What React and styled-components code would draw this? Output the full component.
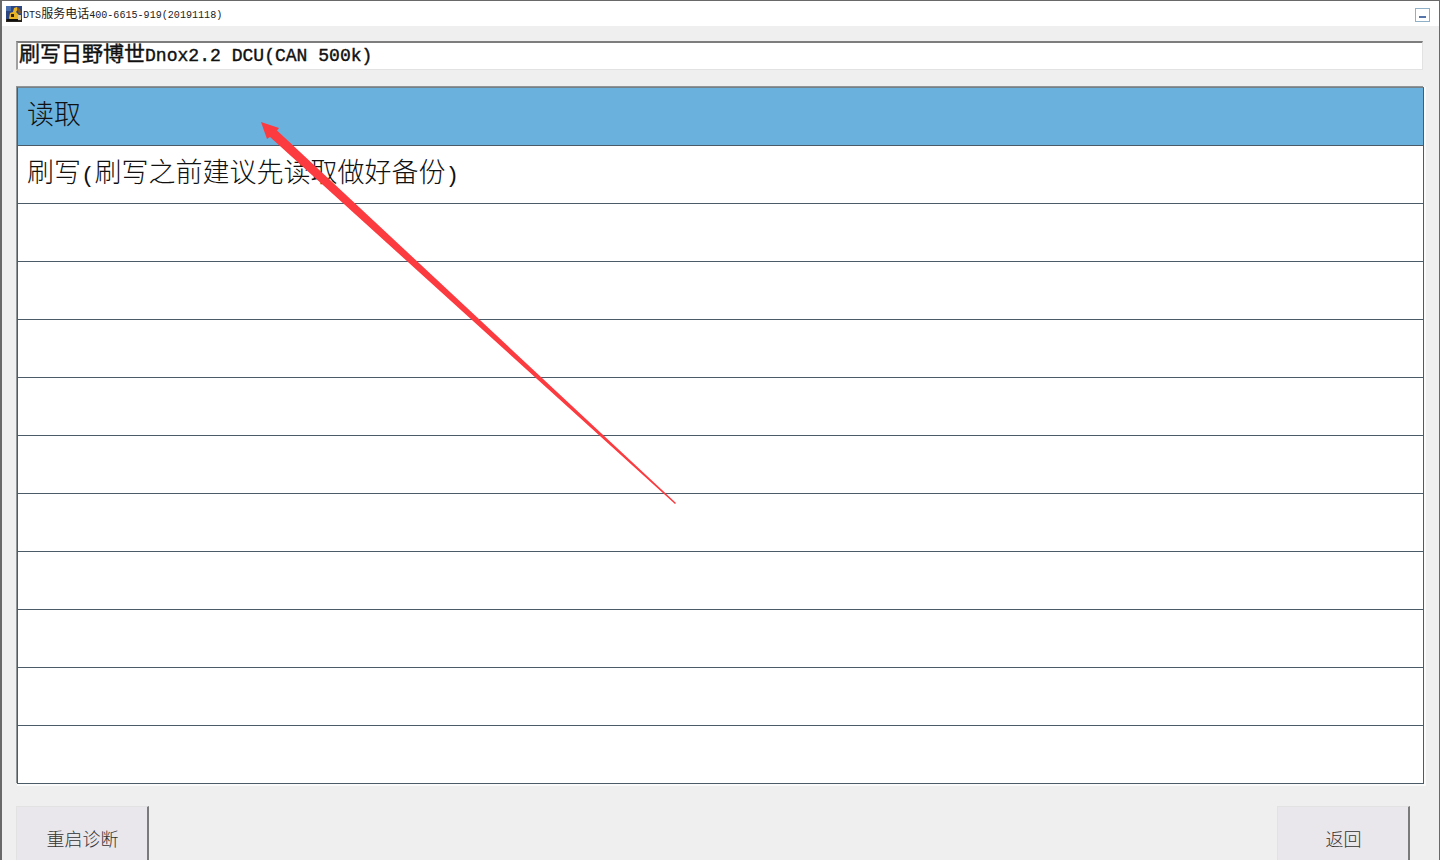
import React from 'react'
import styled, { createGlobalStyle } from 'styled-components'

const GlobalStyle = createGlobalStyle`
  html, body {
    margin: 0;
    padding: 0;
    height: 860px;
    overflow: hidden;
    background: #efefef;
  }
  * {
    box-sizing: border-box;
  }
`

const Window = styled.div`
  position: relative;
  display: flex;
  flex-direction: column;
  width: 1440px;
  height: 860px;
  overflow: hidden;
  background: #efefef;
  border-top: 1px solid #696969;
  border-left: 2px solid #696969;
  border-right: 1px solid #696969;
  font-family: 'Noto Sans CJK SC', sans-serif;
`

const TitleBar = styled.div`
  flex: none;
  display: flex;
  align-items: center;
  height: 25px;
  padding: 1px 9px 0 4px;
  background: #fff;
`

const TitleText = styled.div`
  margin-left: 1px;
  font-size: 12px;
  line-height: 24px;
  color: #222;
`

const MinButton = styled.div`
  display: flex;
  align-items: flex-end;
  justify-content: center;
  width: 15px;
  height: 14px;
  margin-left: auto;
  margin-top: 1px;
  padding-bottom: 3px;
  border: 1px solid #8fb0c6;

  &::after {
    content: '';
    width: 7px;
    height: 2px;
    background: #5674aa;
  }
`

const Content = styled.div`
  flex: 1;
  display: flex;
  flex-direction: column;
  min-height: 0;
  padding: 15px 14px 0 14px;
`

const Heading = styled.div`
  flex: none;
  height: 29px;
  width: 1407px;
  padding-left: 1px;
  background: #fff;
  border-top: 2px solid #7d7d7d;
  border-left: 2px solid #a0a0a0;
  border-right: 1px solid #e2e2e2;
  border-bottom: 1px solid #e2e2e2;
  font-size: 21px;
  line-height: 18px;
  color: #111;
  white-space: pre;
  -webkit-text-stroke: 0.4px #111;
`

const Ascii = styled.span`
  font-family: 'Liberation Mono', monospace;
  font-size: ${props => props.size || '0.84em'};
`

const List = styled.div`
  flex: none;
  width: 1407px;
  margin: 17px 0 0 1px;
  background: #fff;
  border: 1px solid #4b5b68;
  border-top-color: #757f86;
  box-shadow: -1px -1px 0 #8f9497, 1px 1px 0 1px #fafafa;
`

const Row = styled.div`
  height: 58px;
  padding-left: 9px;
  background: ${props => (props.active ? '#6ab1de' : '#fff')};
  border-bottom: 1px solid #4b5b68;
  font-size: 27px;
  font-weight: 300;
  line-height: 50px;
  color: #111;
  white-space: pre;

  &:last-child {
    height: 57px;
    border-bottom: none;
  }
`

const Footer = styled.div`
  flex: none;
  display: flex;
  justify-content: space-between;
  margin-top: 22px;
  padding-right: 15px;
`

const FooterButton = styled.div`
  width: 133px;
  height: 70px;
  padding: 18px 0 0 1px;
  background: #e9e7ec;
  border-top: 1px solid #e2e2e2;
  border-left: 1px solid #e2e2e2;
  border-right: 2px solid #7a7a7a;
  font-size: 18px;
  font-weight: 300;
  line-height: 26px;
  text-align: center;
  color: #333;
`

const Overlay = styled.svg`
  position: absolute;
  top: -1px;
  left: -2px;
  pointer-events: none;
`

const AppIcon = () => (
  <svg width="16" height="16" viewBox="0 0 16 16">
    <rect width="16" height="16" fill="#2b4482" />
    <path d="M0 0h5v5H0z" fill="#4a6fae" />
    <path d="M0 13h16v3H0z" fill="#2a241e" />
    <path d="M3 12l1-5 3-1 1-4 3-1 1 2-2 3 3 3 1 3-3 2H4z" fill="#e9b524" />
    <path d="M11 1l3 2 1 4-2 1-1-3-1-2z" fill="#8a5a16" />
    <path d="M5 8h3v3H5z" fill="#2f2416" />
    <path d="M1 13h11v2H1z" fill="#0f0f0f" />
    <path d="M12 9h3v5h-3z" fill="#d9c9a0" />
  </svg>
)

const RedArrow = () => (
  <Overlay width="1440" height="860" viewBox="0 0 1440 860">
    <polygon
      points="261,122 279,128 277,130.5 676,503 675,504 270,137 267,139"
      fill="#fb3b3f"
    />
  </Overlay>
)

const rows = Array.from({ length: 12 }, (_, i) => i)

const App = () => {
  return (
    <Window>
      <GlobalStyle />
      <TitleBar>
        <AppIcon />
        <TitleText>
          <Ascii>DTS</Ascii>服务电话<Ascii>400-6615-919(20191118)</Ascii>
        </TitleText>
        <MinButton />
      </TitleBar>
      <Content>
        <Heading>
          刷写日野博世<Ascii size="0.86em">Dnox2.2 DCU(CAN 500k)</Ascii>
        </Heading>
        <List>
          {rows.map(i => (
            <Row key={i} active={i === 0}>
              {i === 0 && '读取'}
              {i === 1 && (
                <>
                  刷写<Ascii>(</Ascii>刷写之前建议先读取做好备份<Ascii>)</Ascii>
                </>
              )}
            </Row>
          ))}
        </List>
        <Footer>
          <FooterButton>重启诊断</FooterButton>
          <FooterButton>返回</FooterButton>
        </Footer>
      </Content>
      <RedArrow />
    </Window>
  )
}

export default App
